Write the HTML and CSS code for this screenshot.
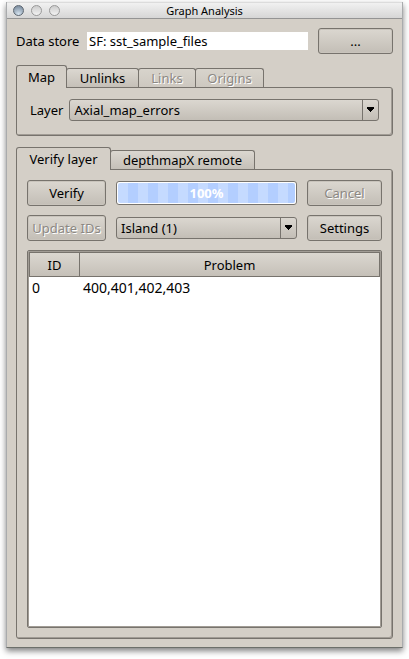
FILE: index.html
```html
<!DOCTYPE html>
<html lang="en">
<head>
<meta charset="utf-8">
<meta name="viewport" content="width=device-width, initial-scale=1">
<title>Graph Analysis</title>
<link rel="stylesheet" href="styles.css">
</head>
<body>
<main class="window">
  <header class="titlebar">
    <div class="lights">
      <button class="light light-close" type="button" aria-label="Close"></button>
      <button class="light" type="button" aria-label="Minimize"></button>
      <button class="light" type="button" aria-label="Zoom"></button>
    </div>
    <h1 class="title">Graph Analysis</h1>
  </header>
  <div class="content">
    <div class="store">
      <label for="store">Data store</label>
      <input class="field" id="store" type="text" value="SF: sst_sample_files">
      <button class="button browse" type="button">...</button>
    </div>

    <section class="group">
      <div class="tabs" role="tablist">
        <button class="tab active tab-map" type="button" role="tab" aria-selected="true">Map</button>
        <button class="tab tab-unlinks" type="button" role="tab">Unlinks</button>
        <button class="tab tab-links" type="button" role="tab" disabled>Links</button>
        <button class="tab tab-origins" type="button" role="tab" disabled>Origins</button>
      </div>
      <div class="pane layer-pane">
        <label for="layer">Layer</label>
        <div class="combo">
          <select id="layer"><option>Axial_map_errors</option></select>
          <svg class="arrow" viewBox="0 0 8 5" aria-hidden="true"><path d="M0 0h7v2H6v1H5v1H4v1H3V4H2V3H1V2H0z"/></svg>
        </div>
      </div>
    </section>

    <section class="group verify-group">
      <div class="tabs" role="tablist">
        <button class="tab active tab-verify" type="button" role="tab" aria-selected="true">Verify layer</button>
        <button class="tab tab-remote" type="button" role="tab">depthmapX remote</button>
      </div>
      <div class="pane verify-pane">
        <div class="controls">
          <button class="button" type="button">Verify</button>
          <div class="progress" role="progressbar" aria-label="Verification" aria-valuenow="100" aria-valuemin="0" aria-valuemax="100"><span class="bar">100%</span></div>
          <button class="button" type="button" disabled>Cancel</button>
          <button class="button" type="button" disabled>Update IDs</button>
          <div class="combo">
            <select aria-label="Problem type"><option>Island (1)</option></select>
            <svg class="arrow" viewBox="0 0 8 5" aria-hidden="true"><path d="M0 0h7v2H6v1H5v1H4v1H3V4H2V3H1V2H0z"/></svg>
          </div>
          <button class="button" type="button">Settings</button>
        </div>
        <div class="results">
          <table>
            <thead><tr><th class="id" scope="col">ID</th><th scope="col">Problem</th></tr></thead>
            <tbody><tr><td>0</td><td>400,401,402,403</td></tr></tbody>
          </table>
        </div>
      </div>
    </section>
  </div>
</main>
</body>
</html>
```
FILE: styles.css
```css
* { box-sizing: border-box; }

body {
  display: flex;
  min-height: 100vh;
  margin: 0;
  padding: 2px 6px 11px;
  background: #fff;
  color: #000;
  font: 13px/16px "Noto Sans", "Open Sans", sans-serif;
}

button, input, select { font: inherit; color: inherit; }

.window {
  flex: 1;
  display: flex;
  flex-direction: column;
  min-width: 0;
  border: 1px solid #a9abad;
  border-top: 0;
  border-bottom-color: #6c6f6a;
  background: #d4cfc7;
  box-shadow: 0 3px 6px rgba(0, 0, 0, 0.5);
}

.titlebar {
  display: grid;
  grid-template-columns: 60px 1fr 60px;
  align-items: center;
  height: 17px;
  border-top: 1px solid #dcdcdc;
  border-bottom: 1px solid #949494;
  background: linear-gradient(#f1f1f1, #d6d6d6);
}

.lights { display: flex; gap: 7px; padding-left: 6px; }

.light {
  width: 11px;
  height: 11px;
  padding: 0;
  border: 1px solid #999;
  border-radius: 50%;
  background: linear-gradient(#ccc, #f2f2f2);
}

.light-close {
  border-color: #5d6771;
  background: radial-gradient(circle at 50% 90%, #d7e5f1, #8293a5 80%);
}

.title {
  margin: 0;
  font-size: 11px;
  font-weight: 400;
  line-height: 15px;
  text-align: center;
}

.content {
  flex: 1;
  display: flex;
  flex-direction: column;
  padding: 9px 9px 8px;
}

.store { display: flex; align-items: center; margin-bottom: 11px; }
.store label { flex: 0 0 71px; }

.field {
  flex: 1;
  min-width: 0;
  height: 18px;
  padding: 0 2px;
  border: 0;
  background: #fff;
}

.button {
  height: 26px;
  padding: 0;
  border: 1px solid #77736d;
  border-radius: 3px;
  background: linear-gradient(#dbd7d0, #c3beb6);
  box-shadow: inset 0 0 0 1px #c9c4bc;
  white-space: nowrap;
}

.browse { width: 75px; margin-left: 10px; }

.button:disabled, .tab:disabled { color: #8c8883; text-shadow: 1px 1px #fff; }

.tabs { display: flex; align-items: flex-end; }

.tab {
  height: 19px;
  margin-left: -1px;
  padding: 0;
  border: 1px solid #77736d;
  border-bottom: 0;
  border-radius: 3px 3px 0 0;
  background: linear-gradient(#dbd7d0, #c5c0b8);
  white-space: nowrap;
}

.tab:disabled { background: linear-gradient(#d8d4cc, #cdc8c0); }

.tab.active {
  z-index: 1;
  height: 23px;
  margin: 0 0 -1px;
  background: #d4cfc7;
}

.tab-map { width: 51px; }
.tab-unlinks { width: 73px; }
.tab-links { width: 58px; }
.tab-origins { width: 69px; }
.tab-verify { width: 95px; }
.tab-remote { width: 145px; }

.pane {
  border: 1px solid #77736d;
  border-radius: 0 3px 3px 3px;
  box-shadow: inset -1px -1px #a19c95;
}

.layer-pane {
  display: flex;
  align-items: center;
  gap: 6px;
  padding: 11px 13px 14px;
}

.combo { position: relative; flex: 1; min-width: 0; }

.combo select {
  display: block;
  appearance: none;
  width: 100%;
  height: 22px;
  padding: 0 18px 0 4px;
  border: 1px solid #77736d;
  border-radius: 3px;
  background: linear-gradient(#77736d, #77736d) right 15px top / 1px 100% no-repeat, linear-gradient(#dbd7d0, #c3beb6);
}

.arrow {
  position: absolute;
  top: 8px;
  right: 4px;
  width: 8px;
  height: 5px;
  pointer-events: none;
}

.verify-group {
  flex: 1;
  display: flex;
  flex-direction: column;
  margin-top: 11px;
}

.verify-pane {
  flex: 1;
  display: flex;
  flex-direction: column;
  gap: 9px;
  padding: 10px;
}

.controls {
  display: grid;
  grid-template-columns: 79px 1fr 75px;
  align-items: center;
  gap: 9px 10px;
}

.progress {
  height: 24px;
  padding: 1px;
  border: 1px solid #77736d;
  border-radius: 3px;
  background: #fff;
}

.bar {
  display: block;
  border-radius: 2px;
  background: repeating-linear-gradient(90deg, #c5daff 0 10px, #b3ceff 10px 20px);
  color: #fff;
  font-weight: 700;
  line-height: 20px;
  text-align: center;
}

.results {
  flex: 1;
  padding: 1px;
  border: 1px solid #77736d;
  border-radius: 2px;
  background: #fff;
  box-shadow: inset 0 0 0 1px #a19c95;
}

table { width: 100%; border-collapse: separate; border-spacing: 0; table-layout: fixed; }

th {
  height: 25px;
  padding: 0;
  border: 1px solid #77736d;
  border-left-width: 0;
  background: linear-gradient(#dbd7d0, #c5c0b8);
  font-weight: 400;
}

.id { width: 51px; border-left-width: 1px; }

td { height: 22px; padding: 0 3px; font-size: 14px; }
```
